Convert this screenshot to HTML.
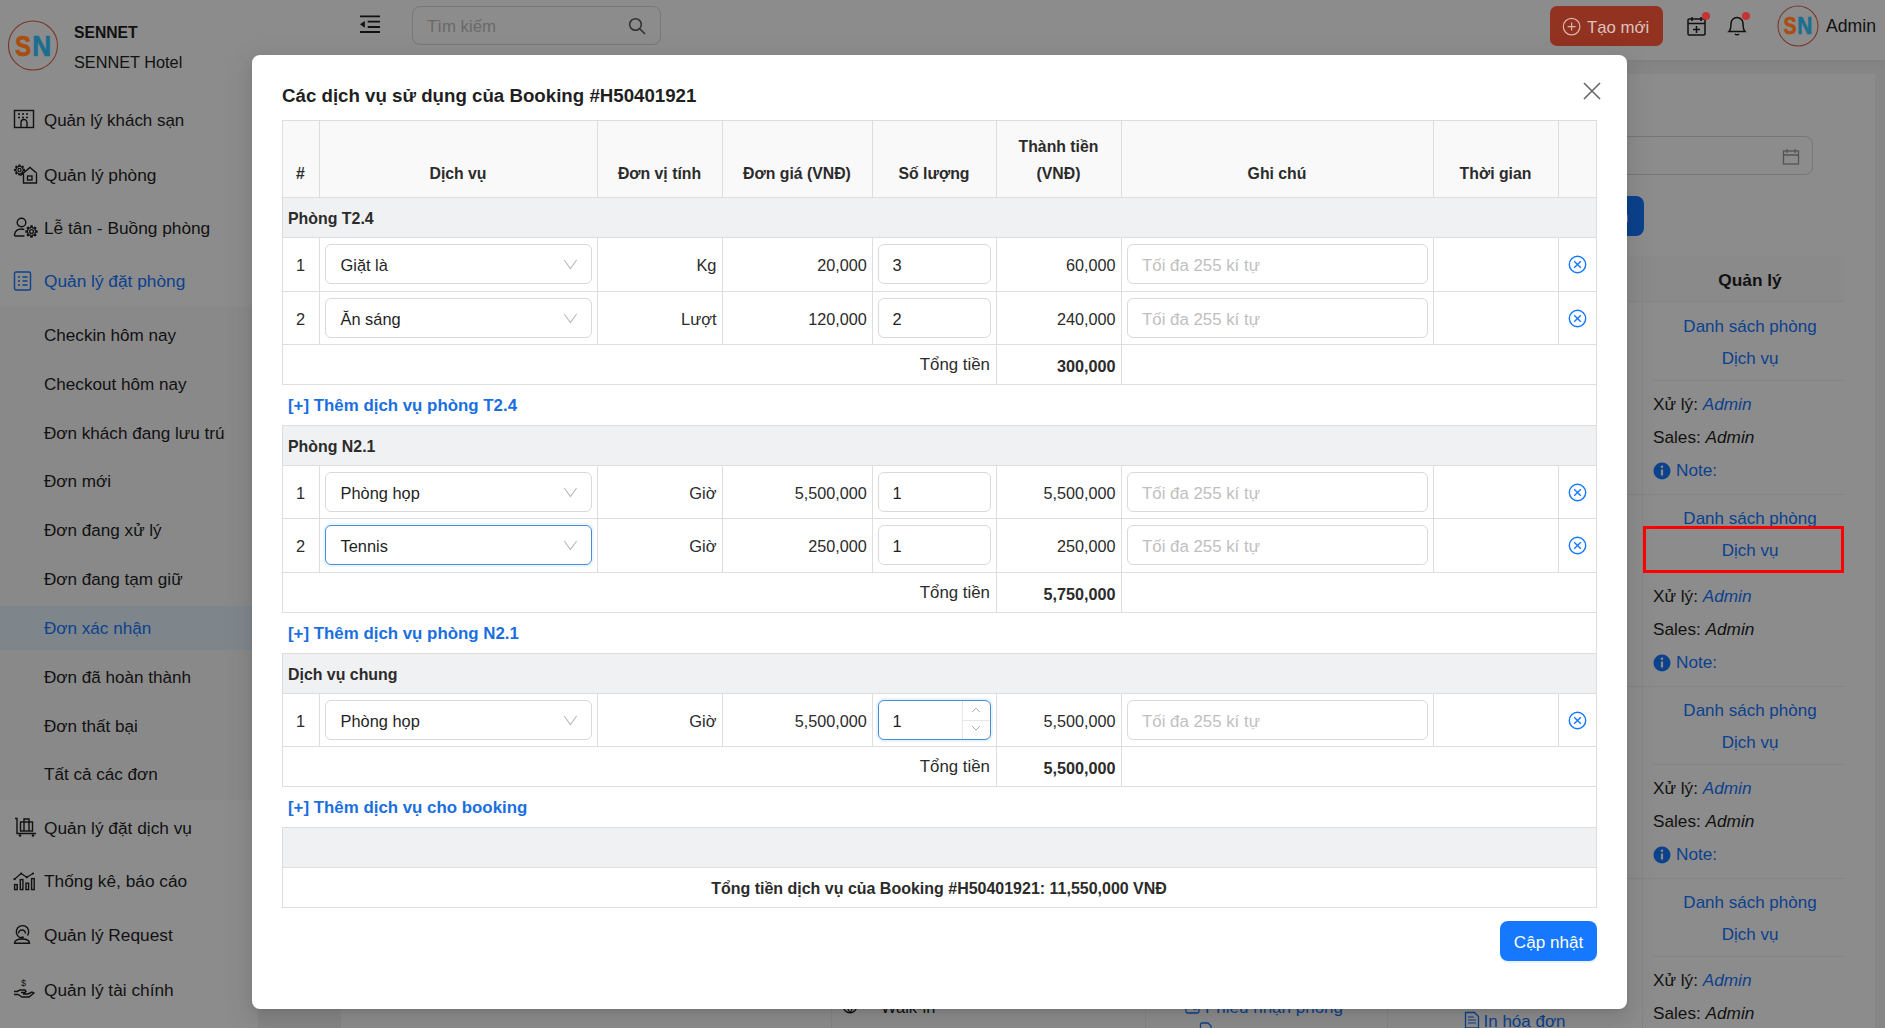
<!DOCTYPE html>
<html><head><meta charset="utf-8"><style>
html,body{margin:0;padding:0;width:1885px;height:1028px;overflow:hidden;background:#fff}
body{position:relative;font-family:"Liberation Sans", sans-serif}
.t{position:absolute;white-space:nowrap;line-height:1}
.r{position:absolute}
.mask{position:absolute;left:0;top:0;width:1885px;height:1028px;background:rgba(0,0,0,0.45)}
</style></head><body>
<div class="r" style="left:0px;top:0px;width:1885px;height:1028px;background:#f4f4f4"></div><div class="r" style="left:0px;top:0px;width:1885px;height:60px;background:#fff;box-shadow:0 2px 8px rgba(0,0,0,0.06)"></div><div class="r" style="left:0px;top:0px;width:258px;height:1028px;background:#fff"></div><div class="r" style="left:0px;top:306px;width:258px;height:494px;background:rgba(0,0,0,0.02)"></div><div class="r" style="left:0px;top:606px;width:258px;height:44px;background:#e6f4ff"></div><svg class="r" style="left:8px;top:20px" width="52" height="52" viewBox="0 0 52 52" fill="none"><circle cx="25" cy="25.5" r="24.5" stroke="#e0634a" stroke-width="1.1"/></svg><div class="t" style="top:24.71px;font-size:15.7px;color:#1f1f1f;font-weight:700;left:74px;">SENNET</div><div class="t" style="top:54.20px;font-size:16.3px;color:#1f1f1f;left:74px;">SENNET Hotel</div><div class="t" style="top:113.06px;font-size:16.94px;color:#1f1f1f;left:44px;">Quản lý khách sạn</div><div class="t" style="top:167.36px;font-size:17.3px;color:#1f1f1f;left:44px;">Quản lý phòng</div><div class="t" style="top:220.36px;font-size:17.3px;color:#1f1f1f;left:44px;">Lễ tân - Buồng phòng</div><div class="t" style="top:273.36px;font-size:17.3px;color:#1677ff;left:44px;">Quản lý đặt phòng</div><div class="t" style="top:327.12px;font-size:17.1px;color:#1f1f1f;left:44px;">Checkin hôm nay</div><div class="t" style="top:376.02px;font-size:17.1px;color:#1f1f1f;left:44px;">Checkout hôm nay</div><div class="t" style="top:424.52px;font-size:17.1px;color:#1f1f1f;left:44px;">Đơn khách đang lưu trú</div><div class="t" style="top:472.52px;font-size:17.1px;color:#1f1f1f;left:44px;">Đơn mới</div><div class="t" style="top:522.22px;font-size:17.1px;color:#1f1f1f;left:44px;">Đơn đang xử lý</div><div class="t" style="top:571.12px;font-size:17.1px;color:#1f1f1f;left:44px;">Đơn đang tạm giữ</div><div class="t" style="top:620.02px;font-size:17.1px;color:#1677ff;left:44px;">Đơn xác nhận</div><div class="t" style="top:668.52px;font-size:17.1px;color:#1f1f1f;left:44px;">Đơn đã hoàn thành</div><div class="t" style="top:717.52px;font-size:17.1px;color:#1f1f1f;left:44px;">Đơn thất bại</div><div class="t" style="top:765.52px;font-size:17.1px;color:#1f1f1f;left:44px;">Tất cả các đơn</div><div class="t" style="top:820.36px;font-size:17.3px;color:#1f1f1f;left:44px;">Quản lý đặt dịch vụ</div><div class="t" style="top:873.36px;font-size:17.3px;color:#1f1f1f;left:44px;">Thống kê, báo cáo</div><div class="t" style="top:927.36px;font-size:17.3px;color:#1f1f1f;left:44px;">Quản lý Request</div><div class="t" style="top:981.56px;font-size:17.3px;color:#1f1f1f;left:44px;">Quản lý tài chính</div><svg class="r" style="left:13px;top:109px" width="22" height="20" viewBox="0 0 22 20" fill="none"><rect x="1.5" y="1.5" width="19" height="17" stroke="#1f1f1f" stroke-width="1.4"/><path d="M5 5h2M9 5h2M13 5h2M5 8.5h2M9 8.5h2M13 8.5h2M8 18.5v-5a3 3 0 0 1 6 0v5" stroke="#1f1f1f" stroke-width="1.4"/></svg><svg class="r" style="left:13px;top:163px" width="25" height="21" viewBox="0 0 25 21" fill="none"><path d="M10.5 11v9h13v-9M7.5 12.5L17 4.5l7 6" stroke="#1f1f1f" stroke-width="1.4"/><rect x="14.5" y="13" width="4.5" height="4" stroke="#1f1f1f" stroke-width="1.4"/><path d="M10.04 6.37 L11.47 6.41 L11.47 7.59 L10.04 7.63 L10.02 7.77 L9.45 9.06 L10.43 10.10 L9.60 10.93 L8.56 9.95 L8.44 10.03 L7.13 10.54 L7.09 11.97 L5.91 11.97 L5.87 10.54 L5.73 10.52 L4.44 9.95 L3.40 10.93 L2.57 10.10 L3.55 9.06 L3.47 8.94 L2.96 7.63 L1.53 7.59 L1.53 6.41 L2.96 6.37 L2.98 6.23 L3.55 4.94 L2.57 3.90 L3.40 3.07 L4.44 4.05 L4.56 3.97 L5.87 3.46 L5.91 2.03 L7.09 2.03 L7.13 3.46 L7.27 3.48 L8.56 4.05 L9.60 3.07 L10.43 3.90 L9.45 4.94 L9.53 5.06Z" stroke="#1f1f1f" stroke-width="1.2" stroke-linejoin="round"/><circle cx="6.5" cy="7" r="1.6" stroke="#1f1f1f" stroke-width="1.2"/></svg><svg class="r" style="left:13px;top:217px" width="26" height="21" viewBox="0 0 26 21" fill="none"><circle cx="8.5" cy="5.5" r="4.3" stroke="#1f1f1f" stroke-width="1.4"/><path d="M11.5 19H2.5a1.2 1.2 0 0 1-1-1.4c.6-3.5 3.4-5.6 7-5.6 1 0 2 .2 2.8.5" stroke="#1f1f1f" stroke-width="1.4"/><path d="M22.44 13.80 L24.06 13.84 L24.06 15.16 L22.44 15.20 L22.41 15.36 L21.78 16.79 L22.90 17.97 L21.97 18.90 L20.79 17.78 L20.66 17.87 L19.20 18.44 L19.16 20.06 L17.84 20.06 L17.80 18.44 L17.64 18.41 L16.21 17.78 L15.03 18.90 L14.10 17.97 L15.22 16.79 L15.13 16.66 L14.56 15.20 L12.94 15.16 L12.94 13.84 L14.56 13.80 L14.59 13.64 L15.22 12.21 L14.10 11.03 L15.03 10.10 L16.21 11.22 L16.34 11.13 L17.80 10.56 L17.84 8.94 L19.16 8.94 L19.20 10.56 L19.36 10.59 L20.79 11.22 L21.97 10.10 L22.90 11.03 L21.78 12.21 L21.87 12.34Z" stroke="#1f1f1f" stroke-width="1.3" stroke-linejoin="round"/><circle cx="18.5" cy="14.5" r="1.9" stroke="#1f1f1f" stroke-width="1.3"/></svg><svg class="r" style="left:13px;top:271px" width="20" height="20" viewBox="0 0 20 20" fill="none"><rect x="1.5" y="1" width="16" height="18" rx="1.5" stroke="#1677ff" stroke-width="1.4"/><path d="M5 6h2M5 10h2M5 14h2M9.5 6h5M9.5 10h5M9.5 14h5" stroke="#1677ff" stroke-width="1.4"/></svg><svg class="r" style="left:13px;top:817px" width="24" height="20" viewBox="0 0 24 20" fill="none"><path d="M2 1.5h2v15h19" stroke="#1f1f1f" stroke-width="1.4"/><rect x="7.5" y="5" width="12" height="9" stroke="#1f1f1f" stroke-width="1.4"/><path d="M11 5V2h5v3M11 5v9M16 5v9" stroke="#1f1f1f" stroke-width="1.4"/><circle cx="7" cy="18.5" r="1.3" fill="#1f1f1f"/><circle cx="20" cy="18.5" r="1.3" fill="#1f1f1f"/></svg><svg class="r" style="left:13px;top:871px" width="23" height="21" viewBox="0 0 23 21" fill="none"><path d="M1.5 8.2L8.1 2.5L13.8 6.3L20 2.5" stroke="#1f1f1f" stroke-width="1.2"/><circle cx="1.5" cy="8.2" r="1.1" fill="#1f1f1f"/><circle cx="8.1" cy="2.5" r="1.1" fill="#1f1f1f"/><circle cx="13.8" cy="6.3" r="1.1" fill="#1f1f1f"/><circle cx="20" cy="2.5" r="1.1" fill="#1f1f1f"/><rect x="1.6" y="13.6" width="2.6" height="5" stroke="#1f1f1f" stroke-width="1.4"/><rect x="7.3" y="8.6" width="2.6" height="10" stroke="#1f1f1f" stroke-width="1.4"/><rect x="13" y="12.2" width="2.6" height="6.4" stroke="#1f1f1f" stroke-width="1.4"/><rect x="18.6" y="7.6" width="2.6" height="11" stroke="#1f1f1f" stroke-width="1.4"/></svg><svg class="r" style="left:13px;top:924px" width="20" height="21" viewBox="0 0 20 21" fill="none"><path d="M14.5 11.5A6.2 6.2 0 1 0 9 14" stroke="#1f1f1f" stroke-width="1.4"/><path d="M5.5 9.5a3.5 3.5 0 0 1 7 0" stroke="#1f1f1f" stroke-width="1.4"/><circle cx="9.5" cy="13.6" r="1.3" fill="#1f1f1f"/><path d="M1.5 19.3c0-2.8 3-4.3 7.5-4.3s7.5 1.5 7.5 4.3z" stroke="#1f1f1f" stroke-width="1.4"/></svg><svg class="r" style="left:13px;top:978px" width="22" height="20" viewBox="0 0 22 20" fill="none"><path d="M1 16.5h4l4 2.5h7l5-4-2-1-4 2h-5M1 13.5h3l3-1.5h5l1 1.5-1 1h-4" stroke="#1f1f1f" stroke-width="1.4"/><text x="8" y="8" font-size="9" font-family="Liberation Sans" fill="#1f1f1f">$</text></svg><svg class="r" style="left:359px;top:14px" width="22" height="20" viewBox="0 0 22 20" fill="none"><path d="M1 2.3h20M8.7 7.6h12.3M8.7 13h12.3M1 18h20" stroke="#1f1f1f" stroke-width="1.8"/><path d="M1 10.3l4.8-3.4v6.8z" fill="#1f1f1f"/></svg><div class="r" style="left:412px;top:6px;width:249px;height:39px;border:1px solid #d9d9d9;border-radius:8px;box-sizing:border-box;background:#fff"></div><div class="t" style="top:19.30px;font-size:16.78px;color:#bfbfbf;left:427px;">Tìm kiếm</div><svg class="r" style="left:628px;top:17px" width="18" height="18" viewBox="0 0 18 18" fill="none"><circle cx="7.5" cy="7.5" r="5.8" stroke="#555" stroke-width="1.5"/><path d="M12 12l5 5" stroke="#555" stroke-width="1.6"/></svg><svg class="r" style="left:1686px;top:15px" width="24" height="22" viewBox="0 0 24 22" fill="none"><rect x="2" y="4" width="17" height="16" rx="1" stroke="#1f1f1f" stroke-width="1.5"/><path d="M2 8.5h17M6 2v4M15 2v4M10.5 11v7M7 14.5h7" stroke="#1f1f1f" stroke-width="1.5"/></svg><svg class="r" style="left:1726px;top:14px" width="24" height="23" viewBox="0 0 24 23" fill="none"><path d="M3 17.5c2-2 2-4 2-8a6 6 0 0 1 12 0c0 4 0 6 2 8z" stroke="#1f1f1f" stroke-width="1.5"/><path d="M9 20a2.5 2 0 0 0 4 0" stroke="#1f1f1f" stroke-width="1.5"/></svg><svg class="r" style="left:1777px;top:5px" width="42" height="42" viewBox="0 0 42 42" fill="none"><circle cx="21" cy="21" r="20" stroke="#e0634a" stroke-width="1.1"/></svg><div class="t" style="top:17.77px;font-size:17.64px;color:#1f1f1f;left:1826px;">Admin</div><div class="r" style="left:341px;top:74px;width:1534px;height:954px;background:#fff"></div><div class="r" style="left:1620px;top:136px;width:193px;height:39px;border:1px solid #d9d9d9;border-radius:8px;box-sizing:border-box"></div><svg class="r" style="left:1782px;top:148px" width="18" height="18" viewBox="0 0 18 18" fill="none"><rect x="1.5" y="3" width="15" height="13" stroke="#999" stroke-width="1.3"/><path d="M1.5 7h15M5 1v4M13 1v4" stroke="#999" stroke-width="1.3"/></svg><div class="r" style="left:1560px;top:196px;width:84px;height:40px;background:#1677ff;border-radius:8px"></div><div class="t" style="top:208.11px;font-size:17px;color:#fff;left:1619px;">n</div><div class="r" style="left:1400px;top:256px;width:444px;height:46px;background:#fcfcfc;border-bottom:1px solid #f0f0f0;box-sizing:border-box"></div><div class="r" style="left:1642px;top:256px;width:1px;height:772px;background:#f0f0f0"></div><div class="t" style="top:272.36px;font-size:17.3px;color:#1f1f1f;font-weight:700;left:1750px;transform:translateX(-50%);">Quản lý</div><div class="t" style="top:318.31px;font-size:17px;color:#1677ff;left:1750px;transform:translateX(-50%);">Danh sách phòng</div><div class="t" style="top:350.41px;font-size:17px;color:#1677ff;left:1750px;transform:translateX(-50%);">Dịch vụ</div><div class="r" style="left:1653px;top:380px;width:191px;height:1px;background:#f0f0f0"></div><div class="t" style="top:396.04px;font-size:17.2px;color:#1f1f1f;left:1653px;">Xử lý: <i style="color:#1677ff">Admin</i></div><div class="t" style="top:428.74px;font-size:17.2px;color:#1f1f1f;left:1653px;">Sales: <i>Admin</i></div><svg class="r" style="left:1653px;top:462px" width="18" height="18" viewBox="0 0 18 18" fill="none"><circle cx="9" cy="9" r="8.5" fill="#1677ff"/><path d="M9 7.5v6" stroke="#fff" stroke-width="2.2"/><circle cx="9" cy="4.8" r="1.3" fill="#fff"/></svg><div class="t" style="top:462.04px;font-size:17.2px;color:#1677ff;left:1676px;">Note:</div><div class="r" style="left:1400px;top:494px;width:444px;height:1px;background:#f0f0f0"></div><div class="t" style="top:510.31px;font-size:17px;color:#1677ff;left:1750px;transform:translateX(-50%);">Danh sách phòng</div><div class="t" style="top:542.41px;font-size:17px;color:#1677ff;left:1750px;transform:translateX(-50%);">Dịch vụ</div><div class="r" style="left:1653px;top:572px;width:191px;height:1px;background:#f0f0f0"></div><div class="t" style="top:588.04px;font-size:17.2px;color:#1f1f1f;left:1653px;">Xử lý: <i style="color:#1677ff">Admin</i></div><div class="t" style="top:620.74px;font-size:17.2px;color:#1f1f1f;left:1653px;">Sales: <i>Admin</i></div><svg class="r" style="left:1653px;top:654px" width="18" height="18" viewBox="0 0 18 18" fill="none"><circle cx="9" cy="9" r="8.5" fill="#1677ff"/><path d="M9 7.5v6" stroke="#fff" stroke-width="2.2"/><circle cx="9" cy="4.8" r="1.3" fill="#fff"/></svg><div class="t" style="top:654.04px;font-size:17.2px;color:#1677ff;left:1676px;">Note:</div><div class="r" style="left:1400px;top:686px;width:444px;height:1px;background:#f0f0f0"></div><div class="t" style="top:702.31px;font-size:17px;color:#1677ff;left:1750px;transform:translateX(-50%);">Danh sách phòng</div><div class="t" style="top:734.41px;font-size:17px;color:#1677ff;left:1750px;transform:translateX(-50%);">Dịch vụ</div><div class="r" style="left:1653px;top:764px;width:191px;height:1px;background:#f0f0f0"></div><div class="t" style="top:780.04px;font-size:17.2px;color:#1f1f1f;left:1653px;">Xử lý: <i style="color:#1677ff">Admin</i></div><div class="t" style="top:812.74px;font-size:17.2px;color:#1f1f1f;left:1653px;">Sales: <i>Admin</i></div><svg class="r" style="left:1653px;top:846px" width="18" height="18" viewBox="0 0 18 18" fill="none"><circle cx="9" cy="9" r="8.5" fill="#1677ff"/><path d="M9 7.5v6" stroke="#fff" stroke-width="2.2"/><circle cx="9" cy="4.8" r="1.3" fill="#fff"/></svg><div class="t" style="top:846.04px;font-size:17.2px;color:#1677ff;left:1676px;">Note:</div><div class="r" style="left:1400px;top:878px;width:444px;height:1px;background:#f0f0f0"></div><div class="t" style="top:894.31px;font-size:17px;color:#1677ff;left:1750px;transform:translateX(-50%);">Danh sách phòng</div><div class="t" style="top:926.41px;font-size:17px;color:#1677ff;left:1750px;transform:translateX(-50%);">Dịch vụ</div><div class="r" style="left:1653px;top:956px;width:191px;height:1px;background:#f0f0f0"></div><div class="t" style="top:972.04px;font-size:17.2px;color:#1f1f1f;left:1653px;">Xử lý: <i style="color:#1677ff">Admin</i></div><div class="t" style="top:1004.74px;font-size:17.2px;color:#1f1f1f;left:1653px;">Sales: <i>Admin</i></div><div class="t" style="top:998.53px;font-size:16.5px;color:#1f1f1f;left:881px;">Walk-in</div><svg class="r" style="left:842px;top:998px" width="16" height="16" viewBox="0 0 16 16" fill="none"><circle cx="8" cy="8" r="6.8" stroke="#1f1f1f" stroke-width="1.3"/><path d="M1.5 8h13M8 1.2c-3 3.5-3 10 0 13.6M8 1.2c3 3.5 3 10 0 13.6" stroke="#1f1f1f" stroke-width="1.2"/></svg><div class="t" style="top:999.11px;font-size:17px;color:#1677ff;left:1205px;">Phiếu nhận phòng</div><svg class="r" style="left:1185px;top:999px" width="15" height="16" viewBox="0 0 15 16" fill="none"><rect x="1" y="1" width="13" height="13" rx="1.5" stroke="#1677ff" stroke-width="1.3"/><path d="M8 10h4" stroke="#1677ff" stroke-width="1.3"/></svg><svg class="r" style="left:1199px;top:1022px" width="14" height="8" viewBox="0 0 14 8" fill="none"><path d="M1.5 7V2.5a1.5 1.5 0 0 1 1.5-1.5h6l3 3V7" stroke="#1677ff" stroke-width="1.3"/></svg><div class="t" style="top:1025.61px;font-size:17px;color:#1677ff;left:1216px;">In xác nhận phòng</div><div class="t" style="top:1013.11px;font-size:17px;color:#1677ff;left:1483.5px;">In hóa đơn</div><svg class="r" style="left:1464px;top:1011px" width="16" height="18" viewBox="0 0 16 18" fill="none"><path d="M1.5 17V1.5h9l4 4V17z" stroke="#1677ff" stroke-width="1.3"/><path d="M4 6h6M4 9h8M4 12h8" stroke="#1677ff" stroke-width="1.2"/></svg><div class="r" style="left:831px;top:990px;width:1px;height:38px;background:#f0f0f0"></div><div class="r" style="left:1145px;top:990px;width:1px;height:38px;background:#f0f0f0"></div><div class="r" style="left:1387px;top:990px;width:1px;height:38px;background:#f0f0f0"></div>
<div class="mask"></div>
<svg class="r" style="left:0px;top:0px" width="70" height="80" viewBox="0 0 70 80" fill="none"><text transform="translate(15,55.6) scale(0.84,1)" font-family="Liberation Sans" font-weight="700" font-size="28.6" fill="#a94e10" stroke="#a94e10" stroke-width="0.7">S</text><text transform="translate(32.3,55.6) scale(0.92,1)" font-family="Liberation Sans" font-weight="700" font-size="28.6" fill="#1c6e90" stroke="#1c6e90" stroke-width="0.7">N</text></svg><div class="r" style="left:1550px;top:6px;width:113px;height:40px;background:#923220;border-radius:7px"></div><svg class="r" style="left:1562px;top:17px" width="19" height="19" viewBox="0 0 19 19" fill="none"><circle cx="9.6" cy="9.6" r="8.3" stroke="#d9b5ae" stroke-width="1.2"/><path d="M9.6 5.6v8M5.6 9.6h8" stroke="#d9b5ae" stroke-width="1.2"/></svg><div class="t" style="top:20.27px;font-size:16.81px;color:#dcc3bf;left:1587px;">Tạo mới</div><div class="r" style="left:1702px;top:12px;width:8px;height:8px;background:#c53434;border-radius:50%"></div><div class="r" style="left:1742px;top:12px;width:8px;height:8px;background:#c53434;border-radius:50%"></div><svg class="r" style="left:1770px;top:0px" width="60" height="50" viewBox="0 0 60 50" fill="none"><text transform="translate(13.5,33.5) scale(0.84,1)" font-family="Liberation Sans" font-weight="700" font-size="23.2" fill="#a94e10" stroke="#a94e10" stroke-width="0.6">S</text><text transform="translate(27.2,33.5) scale(0.9,1)" font-family="Liberation Sans" font-weight="700" font-size="23.2" fill="#1c6e90" stroke="#1c6e90" stroke-width="0.6">N</text></svg><div class="r" style="left:1643px;top:526px;width:201px;height:47px;border:3px solid #ff0000;box-sizing:border-box"></div><div class="r" style="left:252px;top:55px;width:1375px;height:954px;background:#fff;border-radius:8px;box-shadow:0 6px 16px rgba(0,0,0,0.08),0 3px 6px -4px rgba(0,0,0,0.12),0 9px 28px 8px rgba(0,0,0,0.05)"></div><div class="t" style="top:87.17px;font-size:18.7px;color:#1f1f1f;font-weight:700;left:282px;">Các dịch vụ sử dụng của Booking #H50401921</div><svg class="r" style="left:1582px;top:81px" width="20" height="20" viewBox="0 0 20 20" fill="none"><path d="M2 2l16 16M18 2L2 18" stroke="#666" stroke-width="1.6"/></svg><div class="r" style="left:282px;top:120px;width:1315px;height:77px;background:#f9f9f9"></div><div class="r" style="left:282px;top:120px;width:1315px;height:1px;background:#dedede"></div><div class="r" style="left:282px;top:197px;width:1315px;height:1px;background:#dedede"></div><div class="r" style="left:282px;top:120px;width:1px;height:78px;background:#dedede"></div><div class="r" style="left:319px;top:120px;width:1px;height:78px;background:#dedede"></div><div class="r" style="left:597px;top:120px;width:1px;height:78px;background:#dedede"></div><div class="r" style="left:722px;top:120px;width:1px;height:78px;background:#dedede"></div><div class="r" style="left:872px;top:120px;width:1px;height:78px;background:#dedede"></div><div class="r" style="left:996px;top:120px;width:1px;height:78px;background:#dedede"></div><div class="r" style="left:1121px;top:120px;width:1px;height:78px;background:#dedede"></div><div class="r" style="left:1433px;top:120px;width:1px;height:78px;background:#dedede"></div><div class="r" style="left:1558px;top:120px;width:1px;height:78px;background:#dedede"></div><div class="r" style="left:1596px;top:120px;width:1px;height:78px;background:#dedede"></div><div class="t" style="top:165.63px;font-size:15.8px;color:#2b2b2b;font-weight:700;left:300.5px;transform:translateX(-50%);">#</div><div class="t" style="top:165.63px;font-size:15.8px;color:#2b2b2b;font-weight:700;left:458px;transform:translateX(-50%);">Dịch vụ</div><div class="t" style="top:165.63px;font-size:15.8px;color:#2b2b2b;font-weight:700;left:659.5px;transform:translateX(-50%);">Đơn vị tính</div><div class="t" style="top:165.63px;font-size:15.8px;color:#2b2b2b;font-weight:700;left:797px;transform:translateX(-50%);">Đơn giá (VNĐ)</div><div class="t" style="top:165.63px;font-size:15.8px;color:#2b2b2b;font-weight:700;left:934px;transform:translateX(-50%);">Số lượng</div><div class="t" style="top:165.63px;font-size:15.8px;color:#2b2b2b;font-weight:700;left:1277px;transform:translateX(-50%);">Ghi chú</div><div class="t" style="top:165.63px;font-size:15.8px;color:#2b2b2b;font-weight:700;left:1495.5px;transform:translateX(-50%);">Thời gian</div><div class="t" style="top:138.93px;font-size:15.8px;color:#2b2b2b;font-weight:700;left:1058.5px;transform:translateX(-50%);">Thành tiền</div><div class="t" style="top:165.63px;font-size:15.8px;color:#2b2b2b;font-weight:700;left:1058.5px;transform:translateX(-50%);">(VNĐ)</div><div class="r" style="left:282px;top:197px;width:1315px;height:40px;background:#f0f1f2"></div><div class="r" style="left:282px;top:197px;width:1315px;height:1px;background:#dedede"></div><div class="r" style="left:282px;top:197px;width:1px;height:41px;background:#dedede"></div><div class="r" style="left:1596px;top:197px;width:1px;height:41px;background:#dedede"></div><div class="t" style="top:210.54px;font-size:15.9px;color:#2b2b2b;font-weight:700;left:288px;">Phòng T2.4</div><div class="r" style="left:282px;top:237px;width:1315px;height:1px;background:#dedede"></div><div class="r" style="left:282px;top:237px;width:1px;height:55px;background:#dedede"></div><div class="r" style="left:319px;top:237px;width:1px;height:55px;background:#dedede"></div><div class="r" style="left:597px;top:237px;width:1px;height:55px;background:#dedede"></div><div class="r" style="left:722px;top:237px;width:1px;height:55px;background:#dedede"></div><div class="r" style="left:872px;top:237px;width:1px;height:55px;background:#dedede"></div><div class="r" style="left:996px;top:237px;width:1px;height:55px;background:#dedede"></div><div class="r" style="left:1121px;top:237px;width:1px;height:55px;background:#dedede"></div><div class="r" style="left:1433px;top:237px;width:1px;height:55px;background:#dedede"></div><div class="r" style="left:1558px;top:237px;width:1px;height:55px;background:#dedede"></div><div class="r" style="left:1596px;top:237px;width:1px;height:55px;background:#dedede"></div><div class="t" style="top:256.62px;font-size:16.4px;color:#2b2b2b;left:300.5px;transform:translateX(-50%);">1</div><div class="r" style="left:325px;top:244px;width:267px;height:40px;border:1px solid #d9d9d9;border-radius:6px;box-sizing:border-box;background:#fff"></div><div class="t" style="top:257.12px;font-size:16.4px;color:#1f1f1f;left:340.5px;">Giặt là</div><svg class="r" style="left:563px;top:258px" width="15" height="13" viewBox="0 0 15 13" fill="none"><path d="M1.2 2L7.4 10.6L13.6 2" stroke="#b8b8b8" stroke-width="1.1"/></svg><div class="t" style="top:256.62px;font-size:16.4px;color:#2b2b2b;right:1168.5px;">Kg</div><div class="t" style="top:256.79px;font-size:16.2px;color:#2b2b2b;right:1018.2px;">20,000</div><div class="r" style="left:878px;top:244px;width:113px;height:40px;border:1px solid #d9d9d9;border-radius:6px;box-sizing:border-box;background:#fff"></div><div class="t" style="top:256.62px;font-size:16.4px;color:#1f1f1f;left:892.5px;">3</div><div class="t" style="top:256.79px;font-size:16.2px;color:#2b2b2b;right:769.4000000000001px;">60,000</div><div class="r" style="left:1127px;top:244px;width:301px;height:40px;border:1px solid #d9d9d9;border-radius:6px;box-sizing:border-box;background:#fff"></div><div class="t" style="top:257.74px;font-size:16.84px;color:#bfbfbf;left:1142px;">Tối đa 255 kí tự</div><svg class="r" style="left:1567px;top:254px" width="21" height="21" viewBox="0 0 21 21" fill="none"><circle cx="10.5" cy="10.5" r="8.2" stroke="#1677ff" stroke-width="1.4"/><path d="M7.2 7.2l6.6 6.6M13.8 7.2l-6.6 6.6" stroke="#1677ff" stroke-width="1.4"/></svg><div class="r" style="left:282px;top:291px;width:1315px;height:1px;background:#dedede"></div><div class="r" style="left:282px;top:291px;width:1px;height:54px;background:#dedede"></div><div class="r" style="left:319px;top:291px;width:1px;height:54px;background:#dedede"></div><div class="r" style="left:597px;top:291px;width:1px;height:54px;background:#dedede"></div><div class="r" style="left:722px;top:291px;width:1px;height:54px;background:#dedede"></div><div class="r" style="left:872px;top:291px;width:1px;height:54px;background:#dedede"></div><div class="r" style="left:996px;top:291px;width:1px;height:54px;background:#dedede"></div><div class="r" style="left:1121px;top:291px;width:1px;height:54px;background:#dedede"></div><div class="r" style="left:1433px;top:291px;width:1px;height:54px;background:#dedede"></div><div class="r" style="left:1558px;top:291px;width:1px;height:54px;background:#dedede"></div><div class="r" style="left:1596px;top:291px;width:1px;height:54px;background:#dedede"></div><div class="t" style="top:310.62px;font-size:16.4px;color:#2b2b2b;left:300.5px;transform:translateX(-50%);">2</div><div class="r" style="left:325px;top:298px;width:267px;height:40px;border:1px solid #d9d9d9;border-radius:6px;box-sizing:border-box;background:#fff"></div><div class="t" style="top:311.12px;font-size:16.4px;color:#1f1f1f;left:340.5px;">Ăn sáng</div><svg class="r" style="left:563px;top:312px" width="15" height="13" viewBox="0 0 15 13" fill="none"><path d="M1.2 2L7.4 10.6L13.6 2" stroke="#b8b8b8" stroke-width="1.1"/></svg><div class="t" style="top:310.62px;font-size:16.4px;color:#2b2b2b;right:1168.5px;">Lượt</div><div class="t" style="top:310.79px;font-size:16.2px;color:#2b2b2b;right:1018.2px;">120,000</div><div class="r" style="left:878px;top:298px;width:113px;height:40px;border:1px solid #d9d9d9;border-radius:6px;box-sizing:border-box;background:#fff"></div><div class="t" style="top:310.62px;font-size:16.4px;color:#1f1f1f;left:892.5px;">2</div><div class="t" style="top:310.79px;font-size:16.2px;color:#2b2b2b;right:769.4000000000001px;">240,000</div><div class="r" style="left:1127px;top:298px;width:301px;height:40px;border:1px solid #d9d9d9;border-radius:6px;box-sizing:border-box;background:#fff"></div><div class="t" style="top:311.74px;font-size:16.84px;color:#bfbfbf;left:1142px;">Tối đa 255 kí tự</div><svg class="r" style="left:1567px;top:308px" width="21" height="21" viewBox="0 0 21 21" fill="none"><circle cx="10.5" cy="10.5" r="8.2" stroke="#1677ff" stroke-width="1.4"/><path d="M7.2 7.2l6.6 6.6M13.8 7.2l-6.6 6.6" stroke="#1677ff" stroke-width="1.4"/></svg><div class="r" style="left:282px;top:344px;width:1315px;height:1px;background:#dedede"></div><div class="r" style="left:282px;top:384px;width:1315px;height:1px;background:#dedede"></div><div class="r" style="left:282px;top:344px;width:1px;height:41px;background:#dedede"></div><div class="r" style="left:996px;top:344px;width:1px;height:41px;background:#dedede"></div><div class="r" style="left:1121px;top:344px;width:1px;height:41px;background:#dedede"></div><div class="r" style="left:1596px;top:344px;width:1px;height:41px;background:#dedede"></div><div class="t" style="top:357.23px;font-size:16.86px;color:#2b2b2b;right:895px;">Tổng tiền</div><div class="t" style="top:357.79px;font-size:16.2px;color:#2b2b2b;font-weight:700;right:769.4000000000001px;">300,000</div><div class="r" style="left:1596px;top:384px;width:1px;height:41px;background:#dedede"></div><div class="t" style="top:397.73px;font-size:16.86px;color:#1a6fe0;font-weight:700;left:288px;">[+] Thêm dịch vụ phòng T2.4</div><div class="r" style="left:282px;top:425px;width:1315px;height:40px;background:#f0f1f2"></div><div class="r" style="left:282px;top:425px;width:1315px;height:1px;background:#dedede"></div><div class="r" style="left:282px;top:425px;width:1px;height:41px;background:#dedede"></div><div class="r" style="left:1596px;top:425px;width:1px;height:41px;background:#dedede"></div><div class="t" style="top:438.54px;font-size:15.9px;color:#2b2b2b;font-weight:700;left:288px;">Phòng N2.1</div><div class="r" style="left:282px;top:465px;width:1315px;height:1px;background:#dedede"></div><div class="r" style="left:282px;top:465px;width:1px;height:54px;background:#dedede"></div><div class="r" style="left:319px;top:465px;width:1px;height:54px;background:#dedede"></div><div class="r" style="left:597px;top:465px;width:1px;height:54px;background:#dedede"></div><div class="r" style="left:722px;top:465px;width:1px;height:54px;background:#dedede"></div><div class="r" style="left:872px;top:465px;width:1px;height:54px;background:#dedede"></div><div class="r" style="left:996px;top:465px;width:1px;height:54px;background:#dedede"></div><div class="r" style="left:1121px;top:465px;width:1px;height:54px;background:#dedede"></div><div class="r" style="left:1433px;top:465px;width:1px;height:54px;background:#dedede"></div><div class="r" style="left:1558px;top:465px;width:1px;height:54px;background:#dedede"></div><div class="r" style="left:1596px;top:465px;width:1px;height:54px;background:#dedede"></div><div class="t" style="top:484.62px;font-size:16.4px;color:#2b2b2b;left:300.5px;transform:translateX(-50%);">1</div><div class="r" style="left:325px;top:472px;width:267px;height:40px;border:1px solid #d9d9d9;border-radius:6px;box-sizing:border-box;background:#fff"></div><div class="t" style="top:485.12px;font-size:16.4px;color:#1f1f1f;left:340.5px;">Phòng họp</div><svg class="r" style="left:563px;top:486px" width="15" height="13" viewBox="0 0 15 13" fill="none"><path d="M1.2 2L7.4 10.6L13.6 2" stroke="#b8b8b8" stroke-width="1.1"/></svg><div class="t" style="top:484.62px;font-size:16.4px;color:#2b2b2b;right:1168.5px;">Giờ</div><div class="t" style="top:484.79px;font-size:16.2px;color:#2b2b2b;right:1018.2px;">5,500,000</div><div class="r" style="left:878px;top:472px;width:113px;height:40px;border:1px solid #d9d9d9;border-radius:6px;box-sizing:border-box;background:#fff"></div><div class="t" style="top:484.62px;font-size:16.4px;color:#1f1f1f;left:892.5px;">1</div><div class="t" style="top:484.79px;font-size:16.2px;color:#2b2b2b;right:769.4000000000001px;">5,500,000</div><div class="r" style="left:1127px;top:472px;width:301px;height:40px;border:1px solid #d9d9d9;border-radius:6px;box-sizing:border-box;background:#fff"></div><div class="t" style="top:485.74px;font-size:16.84px;color:#bfbfbf;left:1142px;">Tối đa 255 kí tự</div><svg class="r" style="left:1567px;top:482px" width="21" height="21" viewBox="0 0 21 21" fill="none"><circle cx="10.5" cy="10.5" r="8.2" stroke="#1677ff" stroke-width="1.4"/><path d="M7.2 7.2l6.6 6.6M13.8 7.2l-6.6 6.6" stroke="#1677ff" stroke-width="1.4"/></svg><div class="r" style="left:282px;top:518px;width:1315px;height:1px;background:#dedede"></div><div class="r" style="left:282px;top:518px;width:1px;height:55px;background:#dedede"></div><div class="r" style="left:319px;top:518px;width:1px;height:55px;background:#dedede"></div><div class="r" style="left:597px;top:518px;width:1px;height:55px;background:#dedede"></div><div class="r" style="left:722px;top:518px;width:1px;height:55px;background:#dedede"></div><div class="r" style="left:872px;top:518px;width:1px;height:55px;background:#dedede"></div><div class="r" style="left:996px;top:518px;width:1px;height:55px;background:#dedede"></div><div class="r" style="left:1121px;top:518px;width:1px;height:55px;background:#dedede"></div><div class="r" style="left:1433px;top:518px;width:1px;height:55px;background:#dedede"></div><div class="r" style="left:1558px;top:518px;width:1px;height:55px;background:#dedede"></div><div class="r" style="left:1596px;top:518px;width:1px;height:55px;background:#dedede"></div><div class="t" style="top:537.62px;font-size:16.4px;color:#2b2b2b;left:300.5px;transform:translateX(-50%);">2</div><div class="r" style="left:325px;top:525px;width:267px;height:40px;border:1px solid #4d8ad6;border-radius:6px;box-sizing:border-box;background:#fff;box-shadow:0 0 0 2px rgba(60,200,255,0.12)"></div><div class="t" style="top:538.12px;font-size:16.4px;color:#1f1f1f;left:340.5px;">Tennis</div><svg class="r" style="left:563px;top:539px" width="15" height="13" viewBox="0 0 15 13" fill="none"><path d="M1.2 2L7.4 10.6L13.6 2" stroke="#b8b8b8" stroke-width="1.1"/></svg><div class="t" style="top:537.62px;font-size:16.4px;color:#2b2b2b;right:1168.5px;">Giờ</div><div class="t" style="top:537.79px;font-size:16.2px;color:#2b2b2b;right:1018.2px;">250,000</div><div class="r" style="left:878px;top:525px;width:113px;height:40px;border:1px solid #d9d9d9;border-radius:6px;box-sizing:border-box;background:#fff"></div><div class="t" style="top:537.62px;font-size:16.4px;color:#1f1f1f;left:892.5px;">1</div><div class="t" style="top:537.79px;font-size:16.2px;color:#2b2b2b;right:769.4000000000001px;">250,000</div><div class="r" style="left:1127px;top:525px;width:301px;height:40px;border:1px solid #d9d9d9;border-radius:6px;box-sizing:border-box;background:#fff"></div><div class="t" style="top:538.74px;font-size:16.84px;color:#bfbfbf;left:1142px;">Tối đa 255 kí tự</div><svg class="r" style="left:1567px;top:535px" width="21" height="21" viewBox="0 0 21 21" fill="none"><circle cx="10.5" cy="10.5" r="8.2" stroke="#1677ff" stroke-width="1.4"/><path d="M7.2 7.2l6.6 6.6M13.8 7.2l-6.6 6.6" stroke="#1677ff" stroke-width="1.4"/></svg><div class="r" style="left:282px;top:572px;width:1315px;height:1px;background:#dedede"></div><div class="r" style="left:282px;top:612px;width:1315px;height:1px;background:#dedede"></div><div class="r" style="left:282px;top:572px;width:1px;height:41px;background:#dedede"></div><div class="r" style="left:996px;top:572px;width:1px;height:41px;background:#dedede"></div><div class="r" style="left:1121px;top:572px;width:1px;height:41px;background:#dedede"></div><div class="r" style="left:1596px;top:572px;width:1px;height:41px;background:#dedede"></div><div class="t" style="top:585.23px;font-size:16.86px;color:#2b2b2b;right:895px;">Tổng tiền</div><div class="t" style="top:585.79px;font-size:16.2px;color:#2b2b2b;font-weight:700;right:769.4000000000001px;">5,750,000</div><div class="r" style="left:1596px;top:612px;width:1px;height:41px;background:#dedede"></div><div class="t" style="top:625.73px;font-size:16.86px;color:#1a6fe0;font-weight:700;left:288px;">[+] Thêm dịch vụ phòng N2.1</div><div class="r" style="left:282px;top:653px;width:1315px;height:40px;background:#f0f1f2"></div><div class="r" style="left:282px;top:653px;width:1315px;height:1px;background:#dedede"></div><div class="r" style="left:282px;top:653px;width:1px;height:41px;background:#dedede"></div><div class="r" style="left:1596px;top:653px;width:1px;height:41px;background:#dedede"></div><div class="t" style="top:666.54px;font-size:15.9px;color:#2b2b2b;font-weight:700;left:288px;">Dịch vụ chung</div><div class="r" style="left:282px;top:693px;width:1315px;height:1px;background:#dedede"></div><div class="r" style="left:282px;top:693px;width:1px;height:54px;background:#dedede"></div><div class="r" style="left:319px;top:693px;width:1px;height:54px;background:#dedede"></div><div class="r" style="left:597px;top:693px;width:1px;height:54px;background:#dedede"></div><div class="r" style="left:722px;top:693px;width:1px;height:54px;background:#dedede"></div><div class="r" style="left:872px;top:693px;width:1px;height:54px;background:#dedede"></div><div class="r" style="left:996px;top:693px;width:1px;height:54px;background:#dedede"></div><div class="r" style="left:1121px;top:693px;width:1px;height:54px;background:#dedede"></div><div class="r" style="left:1433px;top:693px;width:1px;height:54px;background:#dedede"></div><div class="r" style="left:1558px;top:693px;width:1px;height:54px;background:#dedede"></div><div class="r" style="left:1596px;top:693px;width:1px;height:54px;background:#dedede"></div><div class="t" style="top:712.62px;font-size:16.4px;color:#2b2b2b;left:300.5px;transform:translateX(-50%);">1</div><div class="r" style="left:325px;top:700px;width:267px;height:40px;border:1px solid #d9d9d9;border-radius:6px;box-sizing:border-box;background:#fff"></div><div class="t" style="top:713.12px;font-size:16.4px;color:#1f1f1f;left:340.5px;">Phòng họp</div><svg class="r" style="left:563px;top:714px" width="15" height="13" viewBox="0 0 15 13" fill="none"><path d="M1.2 2L7.4 10.6L13.6 2" stroke="#b8b8b8" stroke-width="1.1"/></svg><div class="t" style="top:712.62px;font-size:16.4px;color:#2b2b2b;right:1168.5px;">Giờ</div><div class="t" style="top:712.79px;font-size:16.2px;color:#2b2b2b;right:1018.2px;">5,500,000</div><div class="r" style="left:878px;top:700px;width:113px;height:40px;border:1px solid #4d8ad6;border-radius:6px;box-sizing:border-box;background:#fff;box-shadow:0 0 0 2px rgba(5,145,255,0.1)"></div><div class="r" style="left:962px;top:701px;width:1px;height:38px;background:#e6e6e6"></div><div class="r" style="left:963px;top:719.5px;width:27px;height:1px;background:#e6e6e6"></div><svg class="r" style="left:970px;top:706px" width="12" height="8" viewBox="0 0 12 8" fill="none"><path d="M2.2 6L6 2.2L9.8 6" stroke="#a0a0a0" stroke-width="0.9"/></svg><svg class="r" style="left:970px;top:724px" width="12" height="8" viewBox="0 0 12 8" fill="none"><path d="M2.2 2.2L6 6L9.8 2.2" stroke="#a0a0a0" stroke-width="0.9"/></svg><div class="t" style="top:712.62px;font-size:16.4px;color:#1f1f1f;left:892.5px;">1</div><div class="t" style="top:712.79px;font-size:16.2px;color:#2b2b2b;right:769.4000000000001px;">5,500,000</div><div class="r" style="left:1127px;top:700px;width:301px;height:40px;border:1px solid #d9d9d9;border-radius:6px;box-sizing:border-box;background:#fff"></div><div class="t" style="top:713.74px;font-size:16.84px;color:#bfbfbf;left:1142px;">Tối đa 255 kí tự</div><svg class="r" style="left:1567px;top:710px" width="21" height="21" viewBox="0 0 21 21" fill="none"><circle cx="10.5" cy="10.5" r="8.2" stroke="#1677ff" stroke-width="1.4"/><path d="M7.2 7.2l6.6 6.6M13.8 7.2l-6.6 6.6" stroke="#1677ff" stroke-width="1.4"/></svg><div class="r" style="left:282px;top:746px;width:1315px;height:1px;background:#dedede"></div><div class="r" style="left:282px;top:786px;width:1315px;height:1px;background:#dedede"></div><div class="r" style="left:282px;top:746px;width:1px;height:41px;background:#dedede"></div><div class="r" style="left:996px;top:746px;width:1px;height:41px;background:#dedede"></div><div class="r" style="left:1121px;top:746px;width:1px;height:41px;background:#dedede"></div><div class="r" style="left:1596px;top:746px;width:1px;height:41px;background:#dedede"></div><div class="t" style="top:759.23px;font-size:16.86px;color:#2b2b2b;right:895px;">Tổng tiền</div><div class="t" style="top:759.79px;font-size:16.2px;color:#2b2b2b;font-weight:700;right:769.4000000000001px;">5,500,000</div><div class="r" style="left:1596px;top:786px;width:1px;height:41px;background:#dedede"></div><div class="t" style="top:799.73px;font-size:16.86px;color:#1a6fe0;font-weight:700;left:288px;">[+] Thêm dịch vụ cho booking</div><div class="r" style="left:282px;top:827px;width:1315px;height:40px;background:#f0f1f2"></div><div class="r" style="left:282px;top:827px;width:1315px;height:1px;background:#dedede"></div><div class="r" style="left:282px;top:867px;width:1315px;height:1px;background:#dedede"></div><div class="r" style="left:282px;top:907px;width:1315px;height:1px;background:#dedede"></div><div class="r" style="left:282px;top:827px;width:1px;height:81px;background:#dedede"></div><div class="r" style="left:1596px;top:827px;width:1px;height:81px;background:#dedede"></div><div class="t" style="top:880.86px;font-size:15.99px;color:#2b2b2b;font-weight:700;left:939px;transform:translateX(-50%);">Tổng tiền dịch vụ của Booking #H50401921: 11,550,000 VNĐ</div><div class="r" style="left:1500px;top:921px;width:97px;height:40px;background:#1677ff;border-radius:8px;box-shadow:0 2px 0 rgba(5,145,255,0.1)"></div><div class="t" style="top:933.52px;font-size:17.1px;color:#fff;left:1548.5px;transform:translateX(-50%);">Cập nhật</div>
</body></html>
